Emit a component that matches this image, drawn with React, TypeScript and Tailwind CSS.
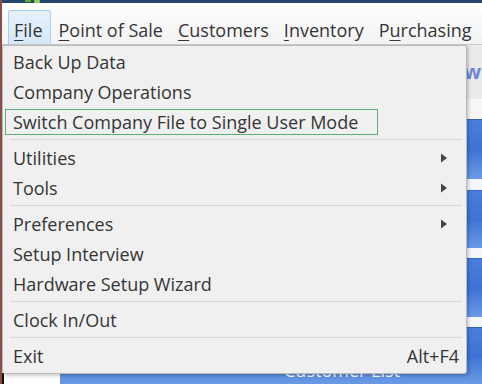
import React from "react";

function Arrow() {
  return (
    <svg width="6" height="10" viewBox="0 0 6 10">
      <path d="M0 0.5 L6 5 L0 9.5Z" fill="#444" />
    </svg>
  );
}

function Item({ label, arrow, shortcut }: { label: string; arrow?: boolean; shortcut?: string }) {
  return (
    <div className="h-[30px] flex items-center pl-[10px] pr-[7px]">
      <span className="flex-1 whitespace-nowrap">{label}</span>
      {arrow && (
        <span className="mr-[12px] flex items-center">
          <Arrow />
        </span>
      )}
      {shortcut && <span className="whitespace-nowrap">{shortcut}</span>}
    </div>
  );
}

function Sep() {
  return (
    <div className="h-[6px] pt-[2px] pl-[7px] pr-[4px]">
      <div className="h-px w-full bg-[#d6d6d6]" />
    </div>
  );
}

function MenuTop({ children, active }: { children: React.ReactNode; active?: boolean }) {
  return (
    <div
      className={
        "h-[34px] flex items-center pt-[6px] pl-[5px] whitespace-nowrap " +
        (active
          ? "pr-[7px] bg-gradient-to-b from-[#e6f0fa] to-[#d6e7f8] border border-b-0 border-[#a9cdee] rounded-t-[3px]"
          : "pr-[6px] border border-transparent")
      }
    >
      {children}
    </div>
  );
}

function BlueBlock({ h, children }: { h: string; children?: React.ReactNode }) {
  return (
    <div
      className={
        h +
        " border-t border-[#3466c4] bg-gradient-to-b from-[#4b7ddb] via-[#3f72d6] to-[#6a9be6] flex justify-center text-white"
      }
    >
      {children}
    </div>
  );
}

export default function App() {
  return (
    <div className="relative w-[482px] h-[384px] overflow-hidden bg-white font-['Open_Sans'] text-[18px] text-[#353535] border-l-2 border-[#8b4c4c]">
      <div className="h-[3px] bg-[#27466f] relative">
        <svg className="absolute left-[23px] top-0" width="16" height="3" viewBox="0 0 16 3">
          <rect x="0" y="0" width="6" height="2" fill="#5fae3c" />
          <rect x="9" y="0" width="6" height="3" rx="1" fill="#8fcf6a" />
        </svg>
      </div>
      <div className="h-[42px] flex items-end pl-[6px] gap-[2px] border-b border-[#c9c9c9] bg-gradient-to-b from-white to-[#f3f3f3]">
        <MenuTop active>
          <span><u className="underline-offset-[3px]">F</u>ile</span>
        </MenuTop>
        <MenuTop>
          <span><u className="underline-offset-[3px]">P</u>oint of Sale</span>
        </MenuTop>
        <MenuTop>
          <span><u className="underline-offset-[3px]">C</u>ustomers</span>
        </MenuTop>
        <MenuTop>
          <span><u className="underline-offset-[3px]">I</u>nventory</span>
        </MenuTop>
        <MenuTop>
          <span>P<u className="underline-offset-[3px]">u</u>rchasing</span>
        </MenuTop>
      </div>
      <div className="flex h-[339px]">
        <div className="w-[58px] flex flex-col">
          <div className="flex-1 bg-white" />
          <div className="h-[11px] bg-white border-l-2 border-[#111]" />
        </div>
        <div className="flex-1 flex flex-col">
          <div className="h-[57px] bg-[#ebebeb] flex items-center justify-end overflow-hidden">
            <span className="text-[#6f86d8] font-bold text-[20px] leading-none mr-[1px]">w</span>
          </div>
          <div className="h-[21px] bg-[#f7f7f7]" />
          <BlueBlock h="h-[62px]" />
          <div className="h-[12px] bg-[#f4f6fb]" />
          <BlueBlock h="h-[61px]" />
          <div className="h-[10px] bg-[#f4f6fb]" />
          <BlueBlock h="h-[62px]" />
          <div className="h-[10px] bg-[#f4f6fb]" />
          <BlueBlock h="h-[60px]">
            <span className="mt-[30px] ml-[142px] text-[18px] leading-[24px]">Customer List</span>
          </BlueBlock>
        </div>
      </div>

      <div className="absolute left-0 top-[45px] w-[465px] bg-[#f0f0f0] border border-[#b9b9b9] rounded-b-[3px] shadow-[2px_2px_3px_rgba(0,0,0,0.18)] pt-[1px] pb-[2px]">
        <Item label="Back Up Data" />
        <Item label="Company Operations" />
        <div className="h-[30px] flex items-center pl-[2px]">
          <div className="w-[373px] h-[26px] border border-[#5aae77] flex items-center pl-[7px] whitespace-nowrap">
            Switch Company File to Single User Mode
          </div>
        </div>
        <Sep />
        <Item label="Utilities" arrow />
        <Item label="Tools" arrow />
        <Sep />
        <Item label="Preferences" arrow />
        <Item label="Setup Interview" />
        <Item label="Hardware Setup Wizard" />
        <Sep />
        <Item label="Clock In/Out" />
        <Sep />
        <Item label="Exit" shortcut="Alt+F4" />
      </div>
    </div>
  );
}
